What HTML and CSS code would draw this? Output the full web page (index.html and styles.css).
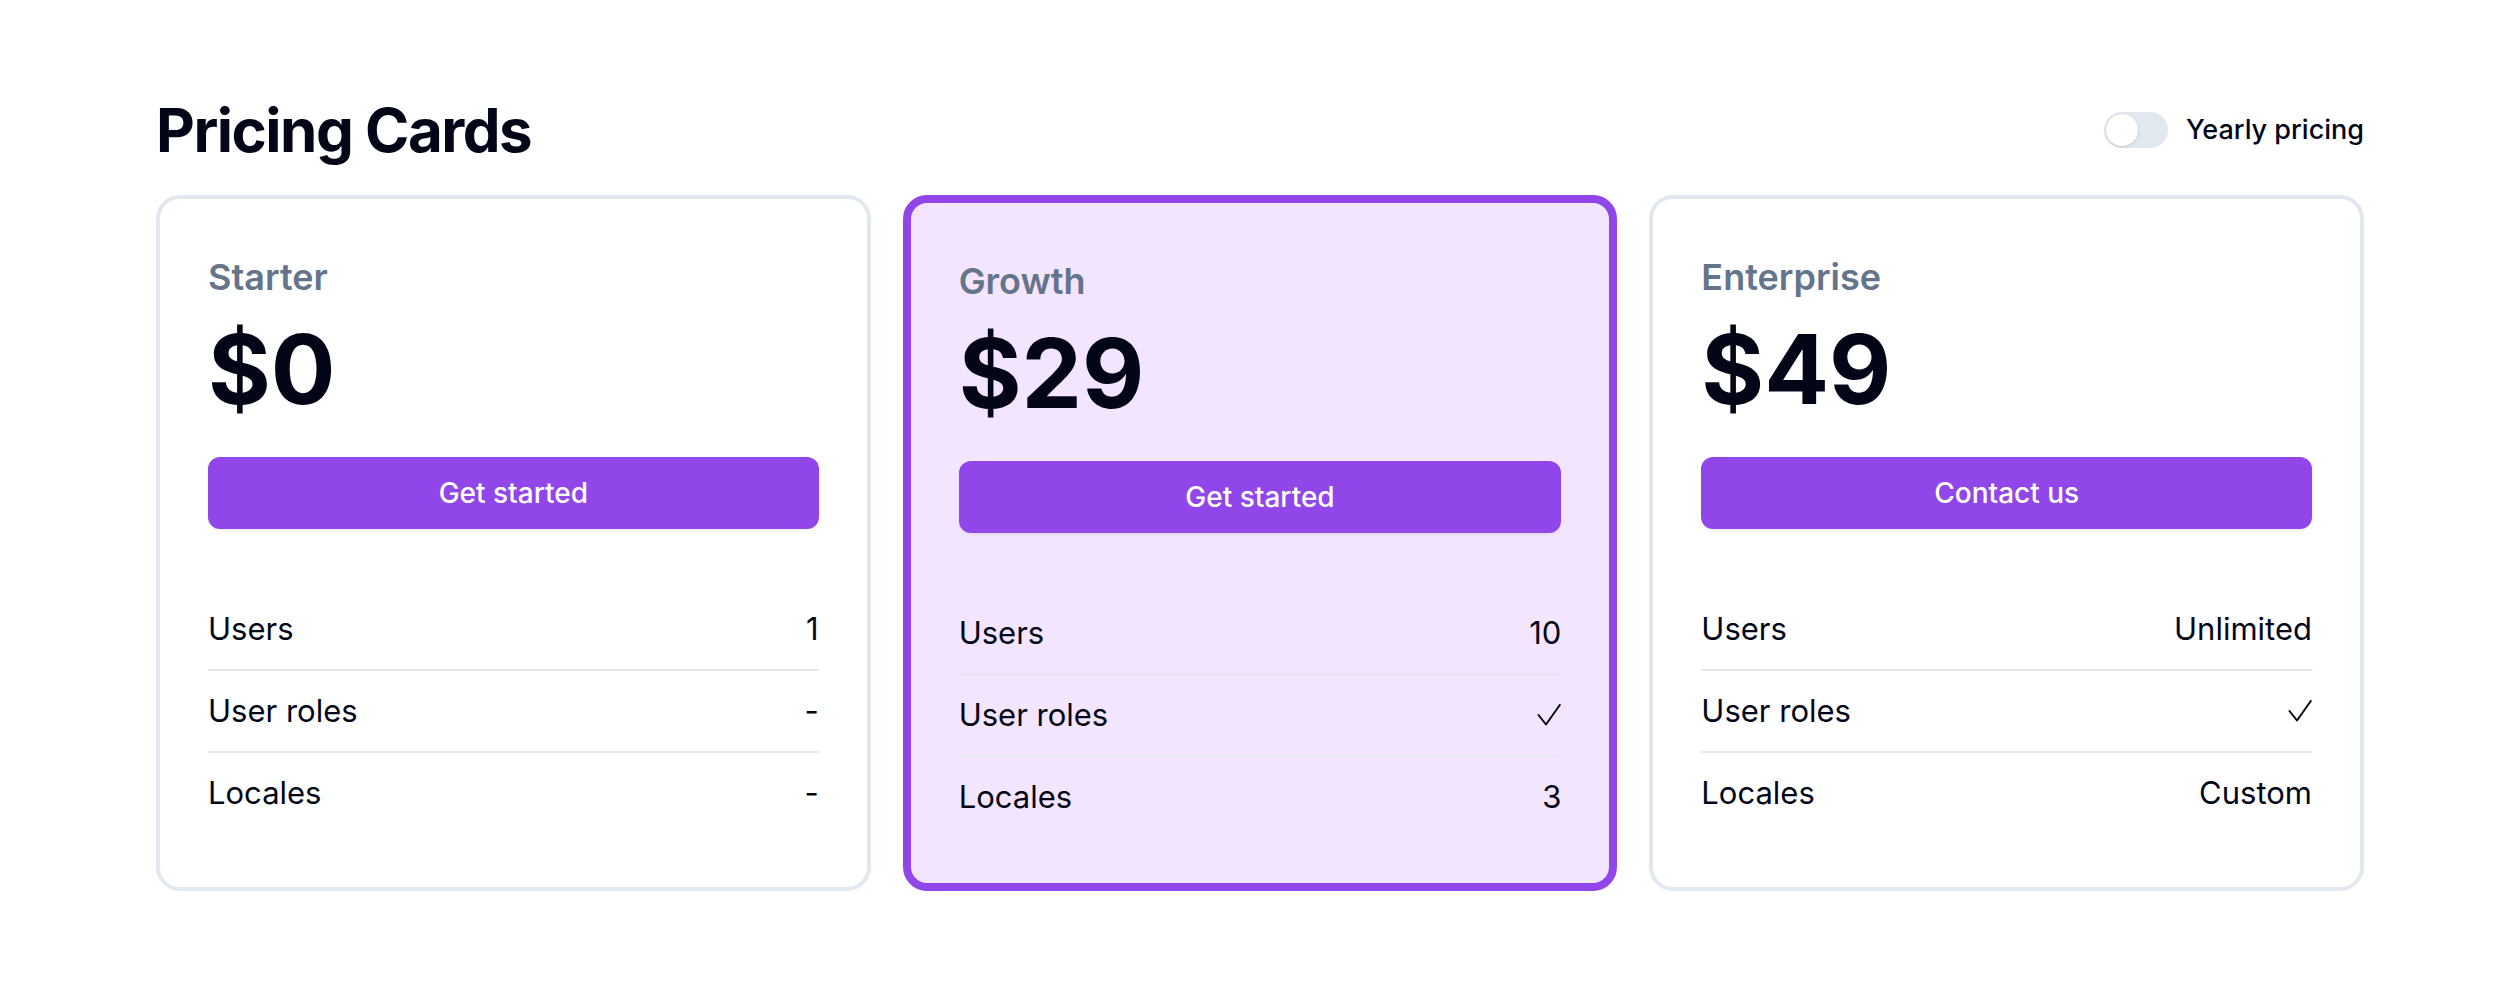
FILE: index.html
```html
<!DOCTYPE html>
<html lang="en">
<head>
<meta charset="utf-8">
<title>Pricing Cards</title>
<link rel="stylesheet" href="styles.css">
</head>
<body>
<main class="page">
  <header class="header">
    <h1 class="title">Pricing Cards</h1>
    <label class="toggle-wrap">
      <span class="toggle"><span class="knob"></span></span>
      <span class="toggle-label">Yearly pricing</span>
    </label>
  </header>
  <section class="cards">
    <article class="card">
      <h2 class="plan">Starter</h2>
      <div class="price">$0</div>
      <button class="cta">Get started</button>
      <ul class="features">
        <li class="row"><span>Users</span><span>1</span></li>
        <li class="row"><span>User roles</span><span>-</span></li>
        <li class="row"><span>Locales</span><span>-</span></li>
      </ul>
    </article>
    <article class="card card-featured">
      <h2 class="plan">Growth</h2>
      <div class="price">$29</div>
      <button class="cta">Get started</button>
      <ul class="features">
        <li class="row"><span>Users</span><span>10</span></li>
        <li class="row"><span>User roles</span><svg class="check" width="24" height="22" viewBox="0 0 24 22" aria-label="included"><path d="M1.5 11 L9 20.5 L22.8 1" fill="none" stroke="#020617" stroke-width="2" stroke-linecap="round" stroke-linejoin="round"/></svg></li>
        <li class="row"><span>Locales</span><span>3</span></li>
      </ul>
    </article>
    <article class="card">
      <h2 class="plan">Enterprise</h2>
      <div class="price">$49</div>
      <button class="cta">Contact us</button>
      <ul class="features">
        <li class="row"><span>Users</span><span>Unlimited</span></li>
        <li class="row"><span>User roles</span><svg class="check" width="24" height="22" viewBox="0 0 24 22" aria-label="included"><path d="M1.5 11 L9 20.5 L22.8 1" fill="none" stroke="#020617" stroke-width="2" stroke-linecap="round" stroke-linejoin="round"/></svg></li>
        <li class="row"><span>Locales</span><span>Custom</span></li>
      </ul>
    </article>
  </section>
</main>
</body>
</html>
```
FILE: styles.css
```css
* { box-sizing: border-box; }

html, body {
  margin: 0;
  padding: 0;
  background: #ffffff;
}

body {
  font-family: Inter, "DejaVu Sans", sans-serif;
  color: #020617;
}

.page {
  width: 2208px;
  margin: 0 auto;
  padding-top: 94px;
}

.header {
  display: flex;
  justify-content: space-between;
  align-items: center;
  margin-bottom: 29px;
}

.title {
  margin: 0;
  font-size: 60px;
  line-height: 72px;
  font-weight: 700;
  letter-spacing: -1.5px;
  color: #020617;
}

.toggle-wrap {
  display: flex;
  align-items: center;
  gap: 18px;
}

.toggle {
  display: flex;
  align-items: center;
  width: 64px;
  height: 36px;
  padding: 2px;
  border-radius: 18px;
  background: #e2e8f0;
}

.knob {
  width: 32px;
  height: 32px;
  border-radius: 50%;
  background: #ffffff;
  box-shadow: 0 1px 3px rgba(15, 23, 42, 0.15);
}

.toggle-label {
  font-size: 27px;
  line-height: 40px;
  font-weight: 500;
  color: #020617;
}

.cards {
  display: grid;
  grid-template-columns: repeat(3, 1fr);
  gap: 32px;
}

.card {
  border: 4px solid #e2e8f0;
  border-radius: 24px;
  padding: 50px 48px 46px;
  background: #ffffff;
}

.card-featured {
  border: 8px solid #9146ea;
  background: #f4e5fe;
}

.plan {
  margin: 0;
  font-size: 36px;
  line-height: 56px;
  font-weight: 600;
  color: #64748b;
}

.price {
  margin-top: 16px;
  font-size: 96px;
  line-height: 96px;
  font-weight: 700;
  color: #020617;
}

.cta {
  display: block;
  width: 100%;
  height: 72px;
  margin-top: 40px;
  border: 0;
  border-radius: 12px;
  background: #9146ea;
  color: #ffffff;
  font-family: Inter, "DejaVu Sans", sans-serif;
  font-size: 28px;
  font-weight: 500;
  box-shadow: 0 2px 3px rgba(15, 23, 42, 0.06);
}

.features {
  list-style: none;
  margin: 60px 0 0;
  padding: 0;
}

.row {
  display: flex;
  justify-content: space-between;
  align-items: center;
  padding: 16px 0;
  font-size: 31px;
  line-height: 48px;
  color: #020617;
  border-bottom: 2px solid #e2e8f0;
}

.row:last-child {
  border-bottom: 0;
}

.card-featured .row {
  border-bottom-color: #e7e4f4;
}

.card-featured .row:last-child {
  border-bottom: 0;
}

.check {
  display: block;
  flex: none;
}
```
